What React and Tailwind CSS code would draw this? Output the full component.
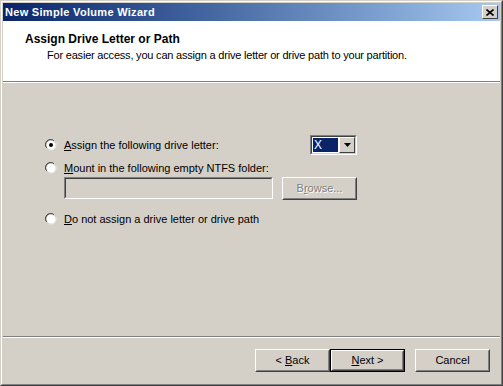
import React from 'react';

const font = { fontFamily: '"Liberation Sans", Arial, sans-serif' };

function Radio({ checked }) {
  return (
    <svg width="12" height="12" viewBox="0 0 12 12" className="shrink-0">
      <path d="M1 8 A5.5 5.5 0 0 1 8 1" fill="none" stroke="#808080" strokeWidth="1" />
      <path d="M2 9 A4.5 4.5 0 0 1 9 2" fill="none" stroke="#404040" strokeWidth="1" />
      <circle cx="6" cy="6" r="4.5" fill="#fff" />
      <path d="M4 11 A5.5 5.5 0 0 0 11 4" fill="none" stroke="#fff" strokeWidth="1" />
      <path d="M3 10 A4.5 4.5 0 0 0 10 3" fill="none" stroke="#d4d0c8" strokeWidth="1" />
      {checked && <circle cx="6" cy="6" r="2" fill="#000" />}
    </svg>
  );
}

function Button({ children, def, disabled }) {
  return (
    <div className={`w-[75px] h-[23px] ${def ? 'border border-black' : ''}`}>
      <div className="w-full h-full border border-t-white border-l-white border-r-[#404040] border-b-[#404040]">
        <div className="w-full h-full border border-t-[#d4d0c8] border-l-[#d4d0c8] border-r-[#808080] border-b-[#808080] flex items-center justify-center text-[11px]">
          <span className={disabled ? 'text-[#808080] [text-shadow:1px_1px_0_#fff]' : 'text-black'}>{children}</span>
        </div>
      </div>
    </div>
  );
}

export default function App() {
  return (
    <div className="w-[503px] h-[386px] bg-[#d4d0c8] select-none" style={font}>
      <div className="w-full h-full border border-t-[#d4d0c8] border-l-[#d4d0c8] border-r-[#404040] border-b-[#404040]">
        <div className="w-full h-full border border-t-white border-l-white border-r-[#808080] border-b-[#808080] p-px flex flex-col">
          {/* title bar */}
          <div className="h-[18px] shrink-0 flex items-center pl-[2px] pr-[2px] bg-gradient-to-r from-[#0a246a] to-[#a6caf0]">
            <span className="text-white font-bold text-[11px] leading-none tracking-[0.3px]">New Simple Volume Wizard</span>
            <div className="ml-auto w-[16px] h-[14px] bg-[#d4d0c8] border border-t-white border-l-white border-r-[#404040] border-b-[#404040] flex items-center justify-center">
              <svg width="8" height="7" viewBox="0 0 8 7">
                <path d="M0.5 0.5 L7.5 6.5 M7.5 0.5 L0.5 6.5" stroke="#000" strokeWidth="1.6" />
              </svg>
            </div>
          </div>

          {/* header */}
          <div className="h-[60px] shrink-0 bg-white pl-[22px] pt-[11px]">
            <div className="text-[12px] font-bold text-black leading-[14px]">Assign Drive Letter or Path</div>
            <div className="text-[11px] text-black leading-[13px] mt-[3px] pl-[22px] tracking-[-0.2px]">
              For easier access, you can assign a drive letter or drive path to your partition.
            </div>
          </div>
          <div className="h-px bg-[#808080] shrink-0" />
          <div className="h-px bg-white shrink-0" />

          {/* body */}
          <div className="flex-1 pt-[52px] pl-[42px]">
            <div className="w-[312px] flex flex-col text-[11px] text-black">
              <div className="h-[20px] flex items-center">
                <Radio checked />
                <span className="ml-[7px]"><u>A</u>ssign the following drive letter:</span>
                <div className="ml-auto w-[47px] h-[20px] bg-white border border-t-[#808080] border-l-[#808080] border-r-white border-b-white">
                  <div className="w-full h-full border border-t-[#404040] border-l-[#404040] border-r-[#d4d0c8] border-b-[#d4d0c8] flex items-center">
                    <div className="flex-1 h-full p-px">
                      <div className="h-full bg-[#0a246a] text-white text-[12px] leading-none flex items-center pl-px">X</div>
                    </div>
                    <div className="w-[16px] h-full bg-[#d4d0c8] border border-t-white border-l-white border-r-[#404040] border-b-[#404040] flex items-center justify-center">
                      <svg width="7" height="4" viewBox="0 0 7 4"><path d="M0 0 H7 L3.5 4 Z" fill="#000" /></svg>
                    </div>
                  </div>
                </div>
              </div>

              <div className="h-[18px] mt-[4px] flex items-center">
                <Radio />
                <span className="ml-[7px]"><u>M</u>ount in the following empty NTFS folder:</span>
              </div>

              <div className="h-[24px] flex items-start pl-[19px]">
                <div className="w-[209px] h-[22px] border border-t-[#808080] border-l-[#808080] border-r-white border-b-white">
                  <div className="w-full h-full border border-t-[#404040] border-l-[#404040] border-r-[#d4d0c8] border-b-[#d4d0c8] bg-[#d4d0c8]" />
                </div>
                <div className="ml-auto">
                  <Button disabled>B<u>r</u>owse...</Button>
                </div>
              </div>

              <div className="h-[18px] mt-[9px] flex items-center">
                <Radio />
                <span className="ml-[7px]"><u>D</u>o not assign a drive letter or drive path</span>
              </div>
            </div>
          </div>

          <div className="h-px bg-[#808080] shrink-0" />
          <div className="h-px bg-white shrink-0" />

          {/* footer */}
          <div className="h-[45px] shrink-0 flex items-start justify-end pt-[11px] pr-[10px]">
            <Button>&lt; <u>B</u>ack</Button>
            <Button def><u>N</u>ext &gt;</Button>
            <div className="ml-[10px]">
              <Button>Cancel</Button>
            </div>
          </div>
        </div>
      </div>
    </div>
  );
}
